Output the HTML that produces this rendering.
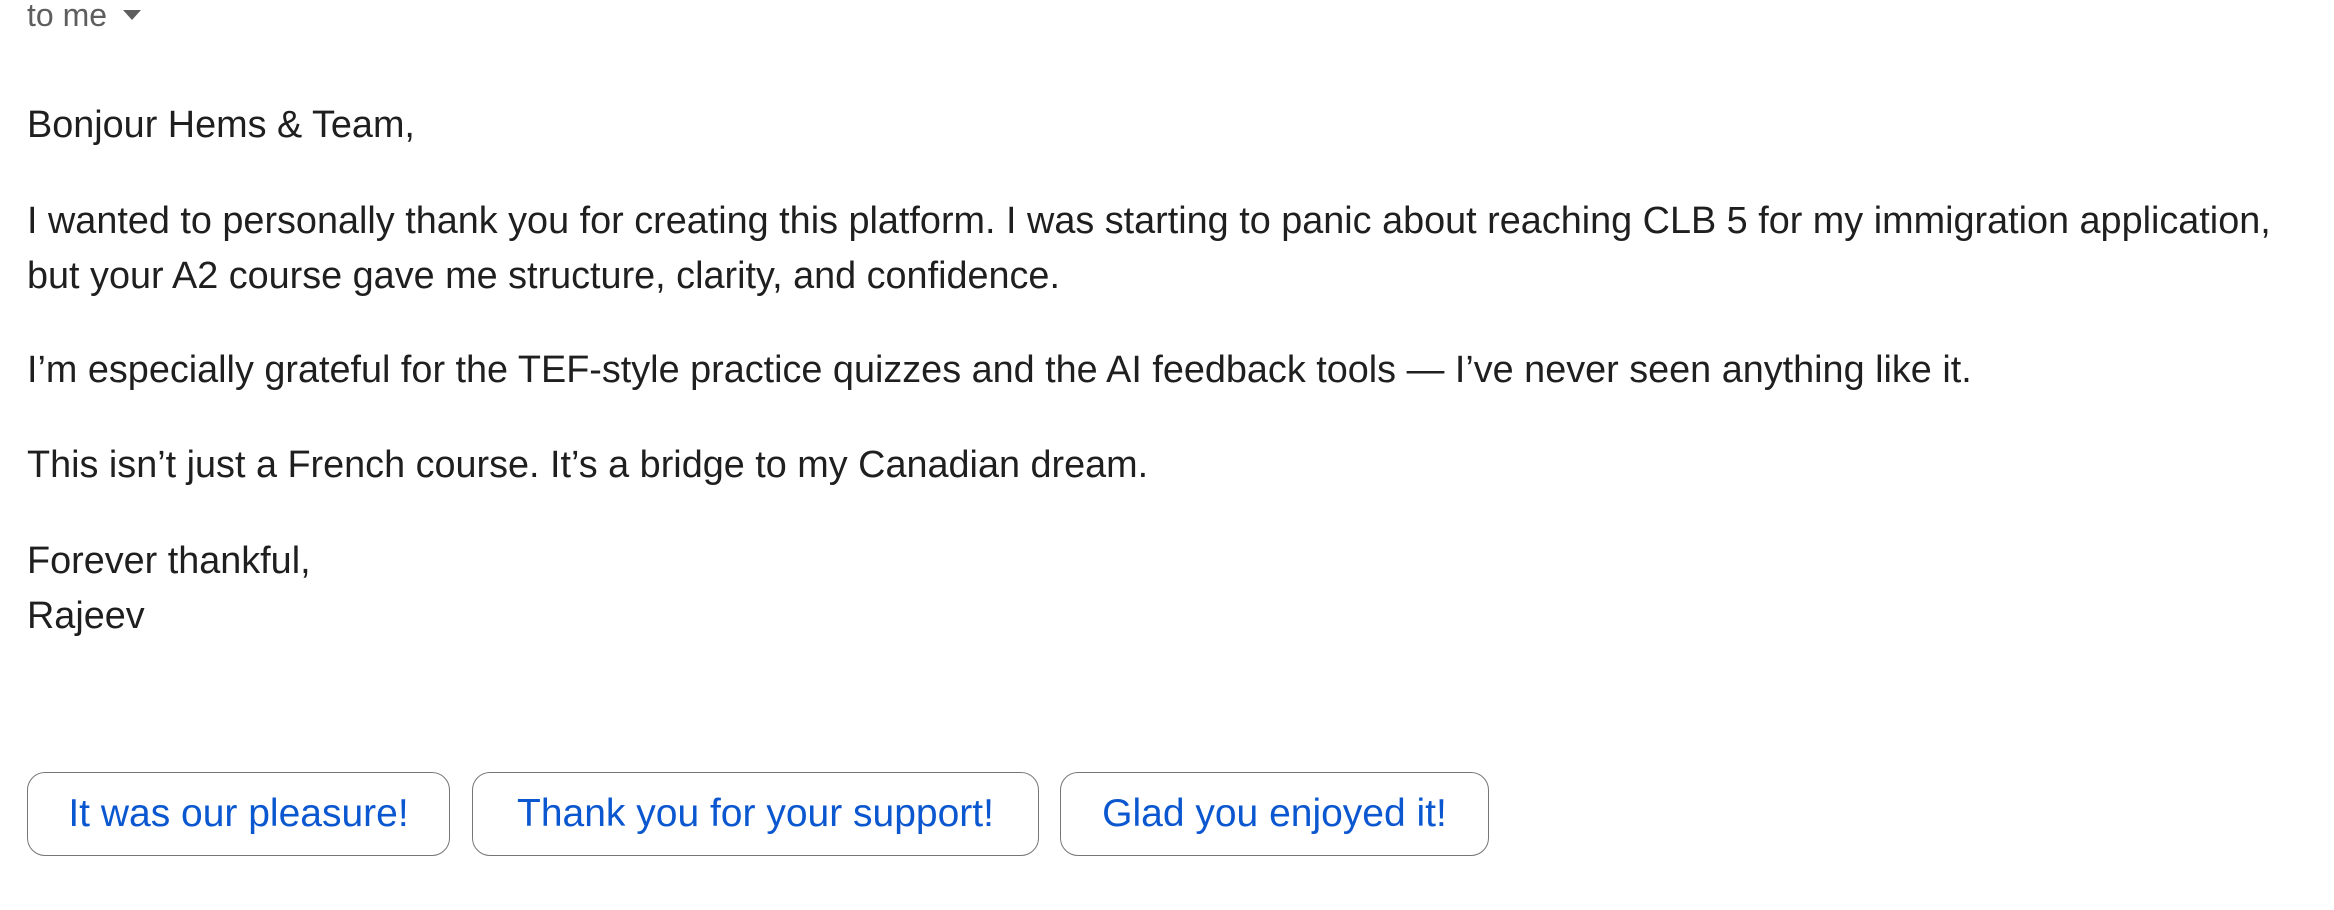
<!DOCTYPE html>
<html><head><meta charset="utf-8"><style>
body{margin:0;width:2334px;height:910px;background:#fff;font-family:"Liberation Sans",Arial,sans-serif;overflow:hidden;position:relative}
.t{position:absolute;left:27px;font-size:37.8px;line-height:55px;color:#1f1f1f;white-space:nowrap}
.tome{position:absolute;left:27px;top:-5px;font-size:32px;line-height:40px;color:#5e5e5e}
.tri{display:inline-block;width:0;height:0;border-left:9px solid transparent;border-right:9px solid transparent;border-top:10px solid #5e5e5e;margin-left:16px;vertical-align:6px}
.b{position:absolute;top:772px;height:84px;border:1.5px solid #747775;border-radius:18px;box-sizing:border-box;color:#0b57d0;font-size:39px;line-height:81px;text-align:center}
</style></head><body>
<div class="tome">to me<span class="tri"></span></div>
<div class="t" style="top:98px">Bonjour Hems &amp; Team,</div>
<div class="t" style="top:194px">I wanted to personally thank you for creating this platform. I was starting to panic about reaching CLB 5 for my immigration application,<br>but your A2 course gave me structure, clarity, and confidence.</div>
<div class="t" style="top:343px">I’m especially grateful for the TEF-style practice quizzes and the AI feedback tools — I’ve never seen anything like it.</div>
<div class="t" style="top:438px">This isn’t just a French course. It’s a bridge to my Canadian dream.</div>
<div class="t" style="top:534px">Forever thankful,<br>Rajeev</div>
<div class="b" style="left:27px;width:423px">It was our pleasure!</div>
<div class="b" style="left:472px;width:567px">Thank you for your support!</div>
<div class="b" style="left:1060px;width:429px">Glad you enjoyed it!</div>
</body></html>
